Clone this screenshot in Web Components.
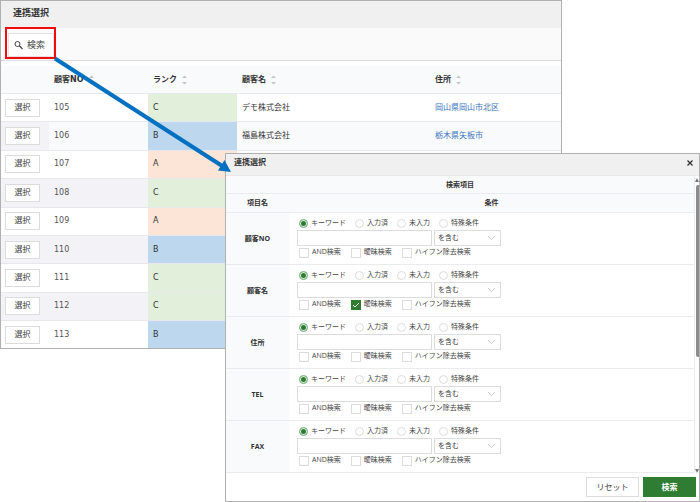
<!DOCTYPE html>
<html lang="ja">
<head>
<meta charset="utf-8">
<title>連携選択</title>
<style>
    body {
        margin: 0;
        background: white;
        color: #333;
        font: 8px/12px "DejaVu Sans", "Noto Sans CJK JP", sans-serif;
    }
</style>
</head>
<body>
<link-desktop>
    <link-window heading="連携選択">
        <search-toolbar></search-toolbar>
        <customer-table></customer-table>
    </link-window>
    <link-window slot="dialog" class="dialog" heading="連携選択" closable>
        <search-form></search-form>
    </link-window>
</link-desktop>

<script>
class LinkDesktop extends HTMLElement {

    constructor () {
        super()
        this.root = this.attachShadow({mode: "open"})
    }

    connectedCallback () {
        this.root.innerHTML =
        `
        <style>
            :host {
                display: grid;
                align-items: start;
                position: relative;
            }

            .back, .front {
                grid-area: 1 / 1;
                min-width: 0;
            }

            .back {
                margin-right: 138px;
            }

            .front {
                margin: 153px 0 0 225px;
            }

            svg {
                position: absolute;
                top: 0;
                left: 0;
                pointer-events: none;
            }
        </style>
        <div class="back"><slot></slot></div>
        <div class="front"><slot name="dialog"></slot></div>
        <svg width="240" height="180" aria-hidden="true">
            <rect x="6" y="28" width="49" height="30" fill="none" stroke="#f00d0d" stroke-width="2"/>
            <path d="M55 58.500L223 166.500" stroke="#0070c0" stroke-width="4"/>
            <path d="M231 172L218 170.500L224.500 160Z" fill="#0070c0"/>
        </svg>
        `
    }
}

class LinkWindow extends HTMLElement {

    constructor () {
        super()
        this.root = this.attachShadow({mode: "open"})
    }

    connectedCallback () {
        const closable = this.hasAttribute("closable")
        this.root.innerHTML =
        `
        <style>
            :host {
                display: block;
                border: 1px solid #b0b0b0;
                background: white;
            }

            header {
                display: flex;
                justify-content: space-between;
                align-items: center;
                height: 27px;
                padding: 0 5px 4px 12px;
                box-sizing: border-box;
                background: #f0f0f0;
            }

            h1 {
                margin: 0;
                font-size: 9px;
                font-weight: bold;
            }

            :host(.dialog) header {
                height: 22px;
                padding-left: 8px;
                border-bottom: 1px solid #e8e8e8;
            }

            :host(.dialog) h1 {
                font-size: 8px;
            }

            button {
                display: flex;
                padding: 0;
                border: 0;
                background: none;
            }
        </style>
        <header>
            <h1>${this.getAttribute("heading")}</h1>
            ${closable ? `
            <button type="button" aria-label="閉じる">
                <svg width="8" height="8" viewBox="0 0 8 8"><path d="M1.500 1.500l5 5m0-5l-5 5" stroke="#333" stroke-width="1.300"/></svg>
            </button>` : ""}
        </header>
        <slot></slot>
        `
    }
}

class SearchToolbar extends HTMLElement {

    constructor () {
        super()
        this.root = this.attachShadow({mode: "open"})
    }

    connectedCallback () {
        this.root.innerHTML =
        `
        <style>
            :host {
                display: flex;
                padding: 5px 7px 3px;
                margin-bottom: 5px;
                background: #fafafa;
                border-bottom: 1px solid #ddd;
            }

            button {
                display: flex;
                align-items: center;
                gap: 4px;
                height: 24px;
                padding: 0 8px 0 5px;
                border: 1px solid #e4e4e4;
                background: white;
                color: #444;
                font: inherit;
                font-size: 9px;
            }
        </style>
        <button type="button">
            <svg width="9" height="9" viewBox="0 0 9 9"><path d="M5.300 4.800L8.500 8" stroke="#444" stroke-width="1.300"/><circle cx="3.500" cy="3" r="2.500" fill="none" stroke="#444"/></svg>
            検索
        </button>
        `
    }
}

const customers = [
    ["105", "C", "デモ株式会社", "岡山県岡山市北区"],
    ["106", "B", "福島株式会社", "栃木県矢板市"],
    ["107", "A", "", ""],
    ["108", "C", "", ""],
    ["109", "A", "", ""],
    ["110", "B", "", ""],
    ["111", "C", "", ""],
    ["112", "C", "", ""],
    ["113", "B", "", ""]
]

class CustomerTable extends HTMLElement {

    constructor () {
        super()
        this.root = this.attachShadow({mode: "open"})
    }

    column (name) {
        return `
        <th scope="col">
            <div>${name}<svg width="5" height="10" viewBox="0 0 5 10"><path d="M0 3L2.500 0.500L5 3ZM0 7L2.500 9.500L5 7Z" fill="#c4c4c4"/></svg></div>
        </th>`
    }

    row ([no, rank, name, address]) {
        return `
        <tr>
            <td><button type="button">選択</button></td>
            <td>${no}</td>
            <td class="rank-${rank}">${rank}</td>
            <td class="name">${name}</td>
            <td>${address && `<a href="#">${address}</a>`}</td>
        </tr>`
    }

    connectedCallback () {
        this.root.innerHTML =
        `
        <style>
            :host {
                display: block;
            }

            table {
                width: 100%;
                height: 282px;
                table-layout: fixed;
                border-collapse: separate;
                border-spacing: 0;
            }

            th, td {
                padding: 0 5px;
                text-align: left;
                border-bottom: 1px solid #e6e8ec;
            }

            th {
                height: 27px;
                background: #f9fafc;
            }

            th div {
                display: flex;
                align-items: center;
                gap: 5px;
            }

            td {
                color: #555;
            }

            .name {
                color: #333;
            }

            tr:nth-child(even) td {
                background: #f2f2f7;
            }

            tr:nth-child(2) td:not(:first-child) {
                background: #f9fafc;
            }

            tbody tr td.rank-A { background: #fce4d6; color: #333; }
            tbody tr:nth-child(n) td.rank-B:not(:first-child) { background: #bdd7ee; color: #333; }
            tbody tr:nth-child(n) td.rank-C:not(:first-child) { background: #e2efda; color: #333; }

            tbody tr:last-child td {
                border-bottom: 0;
            }

            a {
                color: #3a74bd;
                text-decoration: none;
            }

            button {
                display: block;
                width: 35px;
                height: 18px;
                margin-left: -1px;
                padding: 0;
                border: 1px solid #dcdcdc;
                background: white;
                color: #444;
                font: inherit;
            }
        </style>
        <table>
            <colgroup>
                <col style="width: 48px"><col style="width: 99px"><col style="width: 89px"><col style="width: 193px"><col>
            </colgroup>
            <thead>
                <tr><th></th>${["顧客NO", "ランク", "顧客名", "住所"].map(this.column).join("")}</tr>
            </thead>
            <tbody>${customers.map(this.row).join("")}</tbody>
        </table>
        `
    }
}

class SearchCondition extends HTMLElement {

    constructor () {
        super()
        this.root = this.attachShadow({mode: "open"})
    }

    connectedCallback () {
        const fuzzy = this.hasAttribute("fuzzy")
        const modes = ["キーワード", "入力済", "未入力", "特殊条件"]
        const options = ["AND検索", "曖昧検索", "ハイフン除去検索"]
        this.root.innerHTML =
        `
        <style>
            :host {
                display: flex;
                flex-direction: column;
                gap: 1px;
                color: #444;
                font-weight: normal;
            }

            div {
                display: flex;
                align-items: center;
                height: 11px;
            }

            .modes {
                gap: 9px;
                padding-left: 2px;
            }

            .options {
                gap: 10px;
                padding-left: 2px;
            }

            .keyword {
                height: 16px;
                gap: 2px;
            }

            label {
                display: flex;
                align-items: flex-start;
                gap: 3px;
                white-space: nowrap;
                line-height: 8px;
            }

            input, select {
                appearance: none;
                box-sizing: border-box;
                margin: 0;
                border: 1px solid #dcdcdc;
                border-radius: 0;
                background: white;
                color: inherit;
                font: inherit;
            }

            input[type=radio] {
                width: 9px;
                height: 9px;
                border-radius: 50%;
            }

            input[type=radio]:checked {
                border-color: #8fc093;
                background: #2e7d32;
                box-shadow: inset 0 0 0 1px #e3f1e4;
            }

            input[type=checkbox] {
                width: 10px;
                height: 10px;
            }

            span {
                display: grid;
            }

            span > * {
                grid-area: 1 / 1;
            }

            svg {
                pointer-events: none;
            }

            input[type=checkbox]:checked {
                border-color: #2e7d32;
                background: #2e7d32;
            }

            input[type=text] {
                width: 135px;
                height: 16px;
            }

            .picker {
                align-items: center;
                justify-items: end;
            }

            .picker svg {
                margin-right: 5px;
            }

            select {
                width: 67px;
                height: 16px;
                padding: 0 3px;
            }
        </style>
        <div class="modes">
            ${modes.map((mode, i) => `<label><input type="radio" name="mode" ${i === 0 ? "checked" : ""}>${mode}</label>`).join("")}
        </div>
        <div class="keyword">
            <input type="text" aria-label="${this.getAttribute("label")}">
            <span class="picker">
                <select aria-label="一致条件"><option>を含む</option></select>
                <svg width="9" height="6" viewBox="0 0 9 6"><path d="M1 1l3.500 3.500L8 1" fill="none" stroke="#ccc"/></svg>
            </span>
        </div>
        <div class="options">
            ${options.map((option, i) => `
            <label>
                <span>
                    <input type="checkbox" ${fuzzy && i === 1 ? "checked" : ""}>
                    ${fuzzy && i === 1 ? `<svg width="10" height="10" viewBox="0 0 10 10"><path d="M2 5l2 2l4-4" fill="none" stroke="white"/></svg>` : ""}
                </span>${option}
            </label>`).join("")}
        </div>
        `
    }
}

class SearchForm extends HTMLElement {

    constructor () {
        super()
        this.root = this.attachShadow({mode: "open"})
    }

    connectedCallback () {
        const fields = ["顧客NO", "顧客名", "住所", "TEL", "FAX"]
        this.root.innerHTML =
        `
        <style>
            :host {
                display: block;
                font-family: "Open Sans", "Noto Sans CJK JP", sans-serif;
                font-size: 7px;
            }

            .scroll {
                display: flex;
            }

            table {
                flex: 1;
                table-layout: fixed;
                border-collapse: separate;
                border-spacing: 0;
                border-right: 1px solid #eee;
            }

            th, td {
                padding: 0;
                border-bottom: 1px solid #e9ebee;
            }

            th {
                background: #f9fafc;
            }

            thead th {
                height: 18px;
                padding: 0;
                line-height: 16px;
            }

            thead tr:first-child th {
                height: 17px;
            }

            td {
                padding: 5px 8px 6px;
            }

            .bar {
                display: flex;
                flex-direction: column;
                align-items: center;
                gap: 3px;
                width: 4px;
                padding-top: 2px;
            }

            .thumb {
                width: 3px;
                height: 172px;
                border-radius: 2px 0 0 2px;
                background: #8b8b8b;
            }

            .bar svg:last-child {
                margin-top: auto;
            }

            footer {
                display: flex;
                justify-content: flex-end;
                gap: 4px;
                padding: 4px 3px;
            }

            button {
                width: 53px;
                height: 20px;
                padding: 0;
                border: 1px solid #dcdcdc;
                background: white;
                color: #444;
                font: inherit;
                font-size: 8px;
            }

            .submit {
                border-color: #2e7d32;
                background: #2e7d32;
                color: white;
                font-weight: bold;
            }
        </style>
        <div class="scroll">
            <table>
                <colgroup><col style="width: 63px"><col></colgroup>
                <thead>
                    <tr><th colspan="2">検索項目</th></tr>
                    <tr><th scope="col">項目名</th><th scope="col">条件</th></tr>
                </thead>
                <tbody>
                    ${fields.map(field => `
                    <tr>
                        <th scope="row">${field}</th>
                        <td><search-condition label="${field}" ${field === "顧客名" ? "fuzzy" : ""}></search-condition></td>
                    </tr>`).join("")}
                </tbody>
            </table>
            <div class="bar">
                <svg width="4" height="4" viewBox="0 0 4 4"><path d="M0 4L2 0L4 4Z" fill="#777"/></svg>
                <div class="thumb"></div>
                <svg width="4" height="4" viewBox="0 0 4 4"><path d="M0 0L2 4L4 0Z" fill="#777"/></svg>
            </div>
        </div>
        <footer>
            <button type="button">リセット</button>
            <button type="button" class="submit">検索</button>
        </footer>
        `
    }
}

customElements.define("link-desktop", LinkDesktop)
customElements.define("link-window", LinkWindow)
customElements.define("search-toolbar", SearchToolbar)
customElements.define("customer-table", CustomerTable)
customElements.define("search-condition", SearchCondition)
customElements.define("search-form", SearchForm)
</script>
</body>
</html>
